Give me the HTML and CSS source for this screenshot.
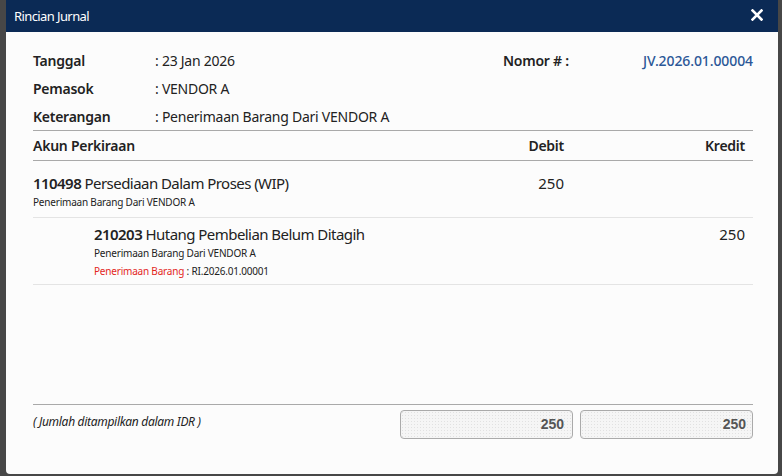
FILE: index.html
```html
<!DOCTYPE html>
<html lang="id">
<head>
  <meta charset="UTF-8">
  <meta name="viewport" content="width=device-width, initial-scale=1.0">
  <title>Rincian Jurnal</title>
  <link rel="stylesheet" href="styles.css">
</head>
<body>

  <div class="modal">
    <div class="modal-head">
      <span class="modal-title">Rincian Jurnal</span>
      <span class="close">
        <svg width="12" height="12" viewBox="0 0 12 12"><path d="M1.5 1.5 L10.5 10.5 M10.5 1.5 L1.5 10.5" stroke="#fff" stroke-width="2.6" stroke-linecap="square"/></svg>
      </span>
    </div>

    <div class="modal-body">
      <div class="info">
        <div class="lbl">Tanggal</div>
        <div class="val">: 23 Jan 2026</div>
        <div class="lbl">Nomor # :</div>
        <div class="nomor">JV.2026.01.00004</div>

        <div class="lbl">Pemasok</div>
        <div class="val wide">: VENDOR A</div>

        <div class="lbl">Keterangan</div>
        <div class="val wide">: Penerimaan Barang Dari VENDOR A</div>
      </div>

      <div class="jurnal">
        <div class="row head">
          <div>Akun Perkiraan</div>
          <div class="num">Debit</div>
          <div class="num kredit">Kredit</div>
        </div>

        <div class="row entry first">
          <div>
            <div class="akun"><b>110498</b> Persediaan Dalam Proses (WIP)</div>
            <div class="sub">Penerimaan Barang Dari VENDOR A</div>
          </div>
          <div class="num amount">250</div>
          <div class="num kredit amount"></div>
        </div>

        <div class="row entry">
          <div class="indent">
            <div class="akun"><b>210203</b> Hutang Pembelian Belum Ditagih</div>
            <div class="sub">Penerimaan Barang Dari VENDOR A</div>
            <div class="sub"><span class="ref">Penerimaan Barang</span> : RI.2026.01.00001</div>
          </div>
          <div class="num amount"></div>
          <div class="num kredit amount">250</div>
        </div>
      </div>

      <div class="total">
        <div class="note">( Jumlah ditampilkan dalam IDR )</div>
        <div class="box">250</div>
        <div class="box kredit">250</div>
      </div>
    </div>
  </div>

</body>
</html>
```

FILE: styles.css
```css
body {
  margin: 0;
  padding: 0;
  height: 476px;
  overflow: hidden;
  background-color: #474747;
  font-family: "Noto Sans", "Open Sans", sans-serif;
  color: #222;
}

.modal {
  margin: 0 4px 0 6px;
  height: 474px;
  background-color: #fcfcfc;
  border-radius: 0 0 4px 4px;
  display: flex;
  flex-direction: column;
}

.modal-head {
  height: 32px;
  background-color: #0b2a55;
  color: white;
  padding: 0 15px 0 8px;
  display: flex;
  align-items: center;
  justify-content: space-between;
}

.modal-title {
  font-size: 13px;
  letter-spacing: -0.6px;
}

.close {
  display: flex;
  margin-top: -2px;
}

.modal-body {
  flex: 1;
  padding: 14px 25px 35px 27px;
  display: flex;
  flex-direction: column;
}

/* header info */
.info {
  display: grid;
  grid-template-columns: 122px 348px 139px 111px;
  grid-auto-rows: 28px;
  align-items: center;
  font-size: 14px;
  letter-spacing: -0.25px;
}

.lbl {
  font-weight: 600;
}

.val.wide {
  grid-column: span 3;
}

.nomor {
  text-align: right;
  color: #2b5797;
  font-weight: 500;
  letter-spacing: -0.1px;
}

/* table */
.jurnal {
  border-top: 1px solid #a9a9a9;
  flex: 1;
}

.row {
  display: grid;
  grid-template-columns: 1fr 173px 173px;
  column-gap: 7px;
}

.num {
  text-align: right;
  padding-right: 9px;
}

.num.kredit {
  padding-right: 8px;
}

.row.head {
  height: 29px;
  align-items: center;
  font-size: 14px;
  font-weight: 600;
  letter-spacing: -0.25px;
  border-bottom: 1px solid #a9a9a9;
}

.row.entry {
  padding: 6px 0 4px;
  border-bottom: 1px solid #e4e4e4;
}

.row.entry.first {
  padding: 12px 0 6px;
}

.akun {
  font-size: 15px;
  line-height: 20px;
  letter-spacing: -0.55px;
}

.akun b {
  font-weight: 600;
}

.sub {
  font-size: 10px;
  line-height: 18px;
  letter-spacing: -0.2px;
}

.ref {
  color: #e3261d;
}

.indent {
  padding-left: 61px;
}

.amount {
  font-size: 15px;
  line-height: 20px;
}

/* footer */
.total {
  display: grid;
  grid-template-columns: 1fr 173px 173px;
  column-gap: 7px;
  border-top: 1px solid #a9a9a9;
  padding-top: 5px;
}

.note {
  font-size: 12px;
  font-style: italic;
  letter-spacing: -0.3px;
  padding-top: 3px;
}

.box {
  height: 27px;
  line-height: 27px;
  border: 1px solid #aaa;
  border-radius: 4px;
  background-color: #f5f5f5;
  background-image: radial-gradient(#e1e1e1 0.6px, transparent 0.8px);
  background-size: 3px 3px;
  text-align: right;
  padding-right: 8px;
  font-family: "Liberation Sans", Arial, sans-serif;
  font-size: 14px;
  font-weight: bold;
  color: #555;
}

.box.kredit {
  padding-right: 6px;
}
```
